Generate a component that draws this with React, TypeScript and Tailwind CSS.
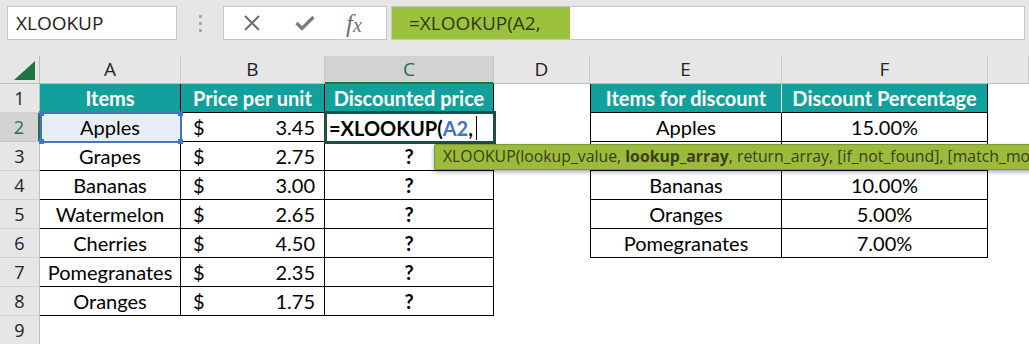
import React from "react";

const cellFont = { fontFamily: "Lato, 'Open Sans', sans-serif" };
const uiFont = { fontFamily: "'Open Sans', 'Noto Sans', sans-serif" };

const items = [
  ["Apples", "3.45"],
  ["Grapes", "2.75"],
  ["Bananas", "3.00"],
  ["Watermelon", "2.65"],
  ["Cherries", "4.50"],
  ["Pomegranates", "2.35"],
  ["Oranges", "1.75"],
];

const discounts = [
  ["Apples", "15.00%"],
  ["", ""],
  ["Bananas", "10.00%"],
  ["Oranges", "5.00%"],
  ["Pomegranates", "7.00%"],
];

const RowHead = ({ n, active }: { n: number; active?: boolean }) => (
  <div
    className={
      active
        ? "h-[29px] flex items-center justify-center bg-[#d2d2d2] border-b border-[#c4c4c4] border-r-2 border-r-[#217346] text-[#217346] text-[18px]"
        : "h-[29px] flex items-center justify-center bg-[#e6e6e6] border-b border-[#d0d0d0] border-r border-r-[#bdbdbd] text-[#222] text-[18px]"
    }
    style={uiFont}
  >
    {n}
  </div>
);

export default function App() {
  return (
    <div className="relative w-[1029px] h-[344px] overflow-hidden bg-white select-none">
      {/* formula bar */}
      <div className="h-[56px] bg-[#e6e6e6] flex items-start pt-[6px] pl-[7px]">
        <div
          className="w-[170px] h-[34px] bg-white border border-[#c6c6c6] flex items-center pl-[8px] text-[19px] text-[#222]"
          style={uiFont}
        >
          XLOOKUP
        </div>
        <div className="w-[46px] h-[34px] flex flex-col items-center justify-center gap-[4px]">
          <span className="w-[3px] h-[3px] bg-[#a9a9a9]" />
          <span className="w-[3px] h-[3px] bg-[#a9a9a9]" />
          <span className="w-[3px] h-[3px] bg-[#a9a9a9]" />
        </div>
        <div className="w-[164px] h-[34px] bg-white border border-[#c6c6c6] flex items-center">
          <svg width="18" height="18" viewBox="0 0 18 18" className="ml-[19px]">
            <path d="M2 2 L16 16 M16 2 L2 16" stroke="#6e6e6e" strokeWidth="2" fill="none" />
          </svg>
          <svg width="20" height="16" viewBox="0 0 20 16" className="ml-[34px]">
            <path d="M1.5 8 L7 13.5 L18.5 2" stroke="#7a7a7a" strokeWidth="3.2" fill="none" />
          </svg>
          <span
            className="ml-[31px] text-[25px] italic text-[#707070] leading-none"
            style={{ fontFamily: "'Liberation Serif', serif" }}
          >
            f<span className="text-[20px]">x</span>
          </span>
        </div>
        <div className="ml-[4px] w-[634px] h-[34px] bg-white border border-[#c6c6c6] flex">
          <div
            className="w-[178px] h-full bg-[#9cc13c] flex items-center pl-[17px] text-[19px] text-[#2e3a12]"
            style={uiFont}
          >
            =XLOOKUP(A2,
          </div>
        </div>
      </div>

      {/* sheet grid */}
      <div className="grid grid-cols-[40px_141px_144px_169px_96px_192px_206px_1fr] text-[20px] text-black">
        {/* column headers */}
        <div className="h-[28px] bg-[#e6e6e6] border-r border-b border-[#bdbdbd] relative">
          <svg width="21" height="19" viewBox="0 0 21 19" className="absolute left-[14px] top-[5px]">
            <path d="M21 0 L21 19 L0 19 Z" fill="#217346" />
          </svg>
        </div>
        {["A", "B"].map((l) => (
          <div
            key={l}
            className="h-[28px] bg-[#e6e6e6] border-r border-[#c8c8c8] border-b border-b-[#bdbdbd] flex items-center justify-center text-[19px] text-[#222]"
            style={uiFont}
          >
            {l}
          </div>
        ))}
        <div
          className="h-[28px] bg-[#d2d2d2] border-r border-[#c8c8c8] border-b-2 border-b-[#217346] flex items-center justify-center text-[19px] text-[#217346]"
          style={uiFont}
        >
          C
        </div>
        {["D", "E", "F", ""].map((l, i) => (
          <div
            key={i}
            className="h-[28px] bg-[#e6e6e6] border-r border-[#c8c8c8] border-b border-b-[#bdbdbd] flex items-center justify-center text-[19px] text-[#222]"
            style={uiFont}
          >
            {l}
          </div>
        ))}

        {/* row 1 */}
        <RowHead n={1} />
        {["Items", "Price per unit", "Discounted price"].map((h) => (
          <div
            key={h}
            className="h-[29px] bg-[#12a09d] border-r border-b border-black flex items-center justify-center font-bold text-white"
            style={cellFont}
          >
            {h}
          </div>
        ))}
        <div className="h-[29px]" />
        <div
          className="h-[29px] bg-[#12a09d] border-l border-b border-black border-r border-r-[#e8f4f4] flex items-center justify-center font-bold text-white"
          style={cellFont}
        >
          Items for discount
        </div>
        <div
          className="h-[29px] bg-[#12a09d] border-r border-b border-black flex items-center justify-center font-bold text-white"
          style={cellFont}
        >
          Discount Percentage
        </div>
        <div className="h-[29px]" />

        {/* rows 2..8 */}
        {items.map(([name, price], i) => {
          const rowNo = i + 2;
          const disc = discounts[i];
          return (
            <React.Fragment key={name}>
              <RowHead n={rowNo} active={rowNo === 2} />
              <div
                className={
                  "h-[29px] border-r border-b border-black flex items-center justify-center " +
                  (rowNo === 2 ? "bg-[#e8eef8]" : "")
                }
                style={cellFont}
              >
                {name}
              </div>
              <div
                className="h-[29px] border-r border-b border-black flex items-center justify-between pl-[12px] pr-[9px]"
                style={cellFont}
              >
                <span>$</span>
                <span>{price}</span>
              </div>
              <div
                className="h-[29px] border-r border-b border-black flex items-center justify-center font-bold"
                style={cellFont}
              >
                {rowNo === 2 ? "" : "?"}
              </div>
              <div className="h-[29px]" />
              {disc ? (
                <>
                  <div
                    className="h-[29px] border-l border-r border-b border-black flex items-center justify-center"
                    style={cellFont}
                  >
                    {disc[0]}
                  </div>
                  <div
                    className="h-[29px] border-r border-b border-black flex items-center justify-center"
                    style={cellFont}
                  >
                    {disc[1]}
                  </div>
                </>
              ) : (
                <>
                  <div className="h-[29px]" />
                  <div className="h-[29px]" />
                </>
              )}
              <div className="h-[29px]" />
            </React.Fragment>
          );
        })}

        {/* row 9 */}
        <RowHead n={9} />
        <div className="h-[29px] col-span-7" />
      </div>

      {/* A2 reference highlight */}
      <div className="absolute left-[40px] top-[112px] w-[142px] h-[31px] border-2 border-[#4472c4] pointer-events-none">
        <span className="absolute -left-[3px] -top-[3px] w-[5px] h-[5px] bg-[#4472c4]" />
        <span className="absolute -right-[3px] -top-[3px] w-[5px] h-[5px] bg-[#4472c4]" />
        <span className="absolute -left-[3px] -bottom-[3px] w-[5px] h-[5px] bg-[#4472c4]" />
        <span className="absolute -right-[3px] -bottom-[3px] w-[5px] h-[5px] bg-[#4472c4]" />
      </div>

      {/* active cell C2 in edit mode */}
      <div
        className="absolute left-[324px] top-[111px] w-[172px] h-[33px] border-[3px] border-[#1f4d4a] bg-white flex items-center pl-[2px] font-bold text-[20px] text-black"
        style={cellFont}
      >
        <span>=XLOOKUP(</span>
        <span className="text-[#4472c4]">A2</span>
        <span>,</span>
        <span className="ml-[3px] w-px h-[24px] bg-black" />
      </div>

      {/* function tooltip */}
      <div
        className="absolute left-[434px] top-[144px] w-[640px] h-[26px] bg-[#9cbb3c] border border-[#7b9a2c] rounded-[2px] shadow-[0_2px_4px_rgba(0,0,0,0.35)] flex items-center pl-[8px] text-[15.8px] text-[#3a3f14] whitespace-nowrap"
        style={uiFont}
      >
        XLOOKUP(lookup_value,&nbsp;<b className="font-bold">lookup_array</b>, return_array, [if_not_found], [match_mode],
        [search_mode])
      </div>
    </div>
  );
}
